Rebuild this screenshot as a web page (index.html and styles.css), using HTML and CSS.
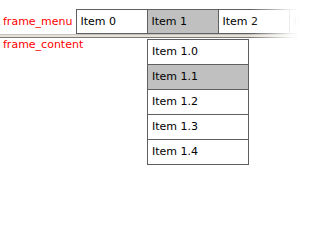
FILE: index.html
```html
<!DOCTYPE html>
<html>
<head>
<meta charset="utf-8">
<link rel="stylesheet" href="styles.css">
</head>
<body>
<div class="page">
  <div class="frame-menu">
    <span class="label">frame_menu</span>
    <div class="menu">
      <div class="menu-item">Item 0</div>
      <div class="menu-item active">Item 1</div>
      <div class="menu-item">Item 2</div>
      <div class="menu-item">Item 3</div>
    </div>
  </div>
  <div class="separator"></div>
  <div class="frame-content">
    <span class="label">frame_content</span>
    <div class="dropdown">
      <div class="drop-item">Item 1.0</div>
      <div class="drop-item active">Item 1.1</div>
      <div class="drop-item">Item 1.2</div>
      <div class="drop-item">Item 1.3</div>
      <div class="drop-item">Item 1.4</div>
    </div>
  </div>
  <div class="fade"></div>
</div>
</body>
</html>
```

FILE: styles.css
```css
html, body {
  margin: 0;
  padding: 0;
  background: #ffffff;
}
body {
  font-family: "DejaVu Sans", Verdana, sans-serif;
  font-size: 11px;
  color: #000;
}
.page {
  position: relative;
  width: 300px;
  height: 200px;
  overflow: hidden;
}
.label {
  color: #ff0000;
  white-space: nowrap;
}
.frame-menu {
  height: 34px;
  box-sizing: border-box;
  padding: 9px 0 0 3px;
  display: flex;
  align-items: baseline;
  gap: 3px;
  white-space: nowrap;
  overflow: hidden;
}
.menu {
  display: flex;
}
.menu-item {
  flex: none;
  width: 71px;
  height: 25px;
  box-sizing: border-box;
  border: 1px solid #5f5f5f;
  border-right: none;
  padding: 0 4px;
  line-height: 23px;
  background: #ffffff;
  overflow: hidden;
}
.menu-item:last-child {
  width: 10px;
  padding-right: 0;
}
.menu-item.active,
.drop-item.active {
  background: #c0c0c0;
}
.separator {
  height: 2px;
  border-top: 1px solid #c4c2bc;
  border-bottom: 1px solid #7a7a7a;
  background: #e6e2d6;
}
.frame-content {
  position: relative;
  padding: 0 0 0 3px;
  line-height: 13px;
}
.dropdown {
  position: absolute;
  left: 147px;
  top: 1px;
  width: 102px;
  box-sizing: border-box;
  border: 1px solid #5f5f5f;
  background: #ffffff;
}
.drop-item {
  height: 25px;
  box-sizing: border-box;
  padding: 0 4px;
  line-height: 24px;
  border-top: 1px solid #5f5f5f;
}
.drop-item:first-child {
  border-top: none;
  height: 24px;
}
.fade {
  position: absolute;
  top: 0;
  right: 0;
  width: 50px;
  height: 200px;
  background: linear-gradient(to right, rgba(255,255,255,0) 0%, rgba(255,255,255,0.5) 45%, rgba(255,255,255,0.9) 80%, #ffffff 100%);
  pointer-events: none;
}
```
